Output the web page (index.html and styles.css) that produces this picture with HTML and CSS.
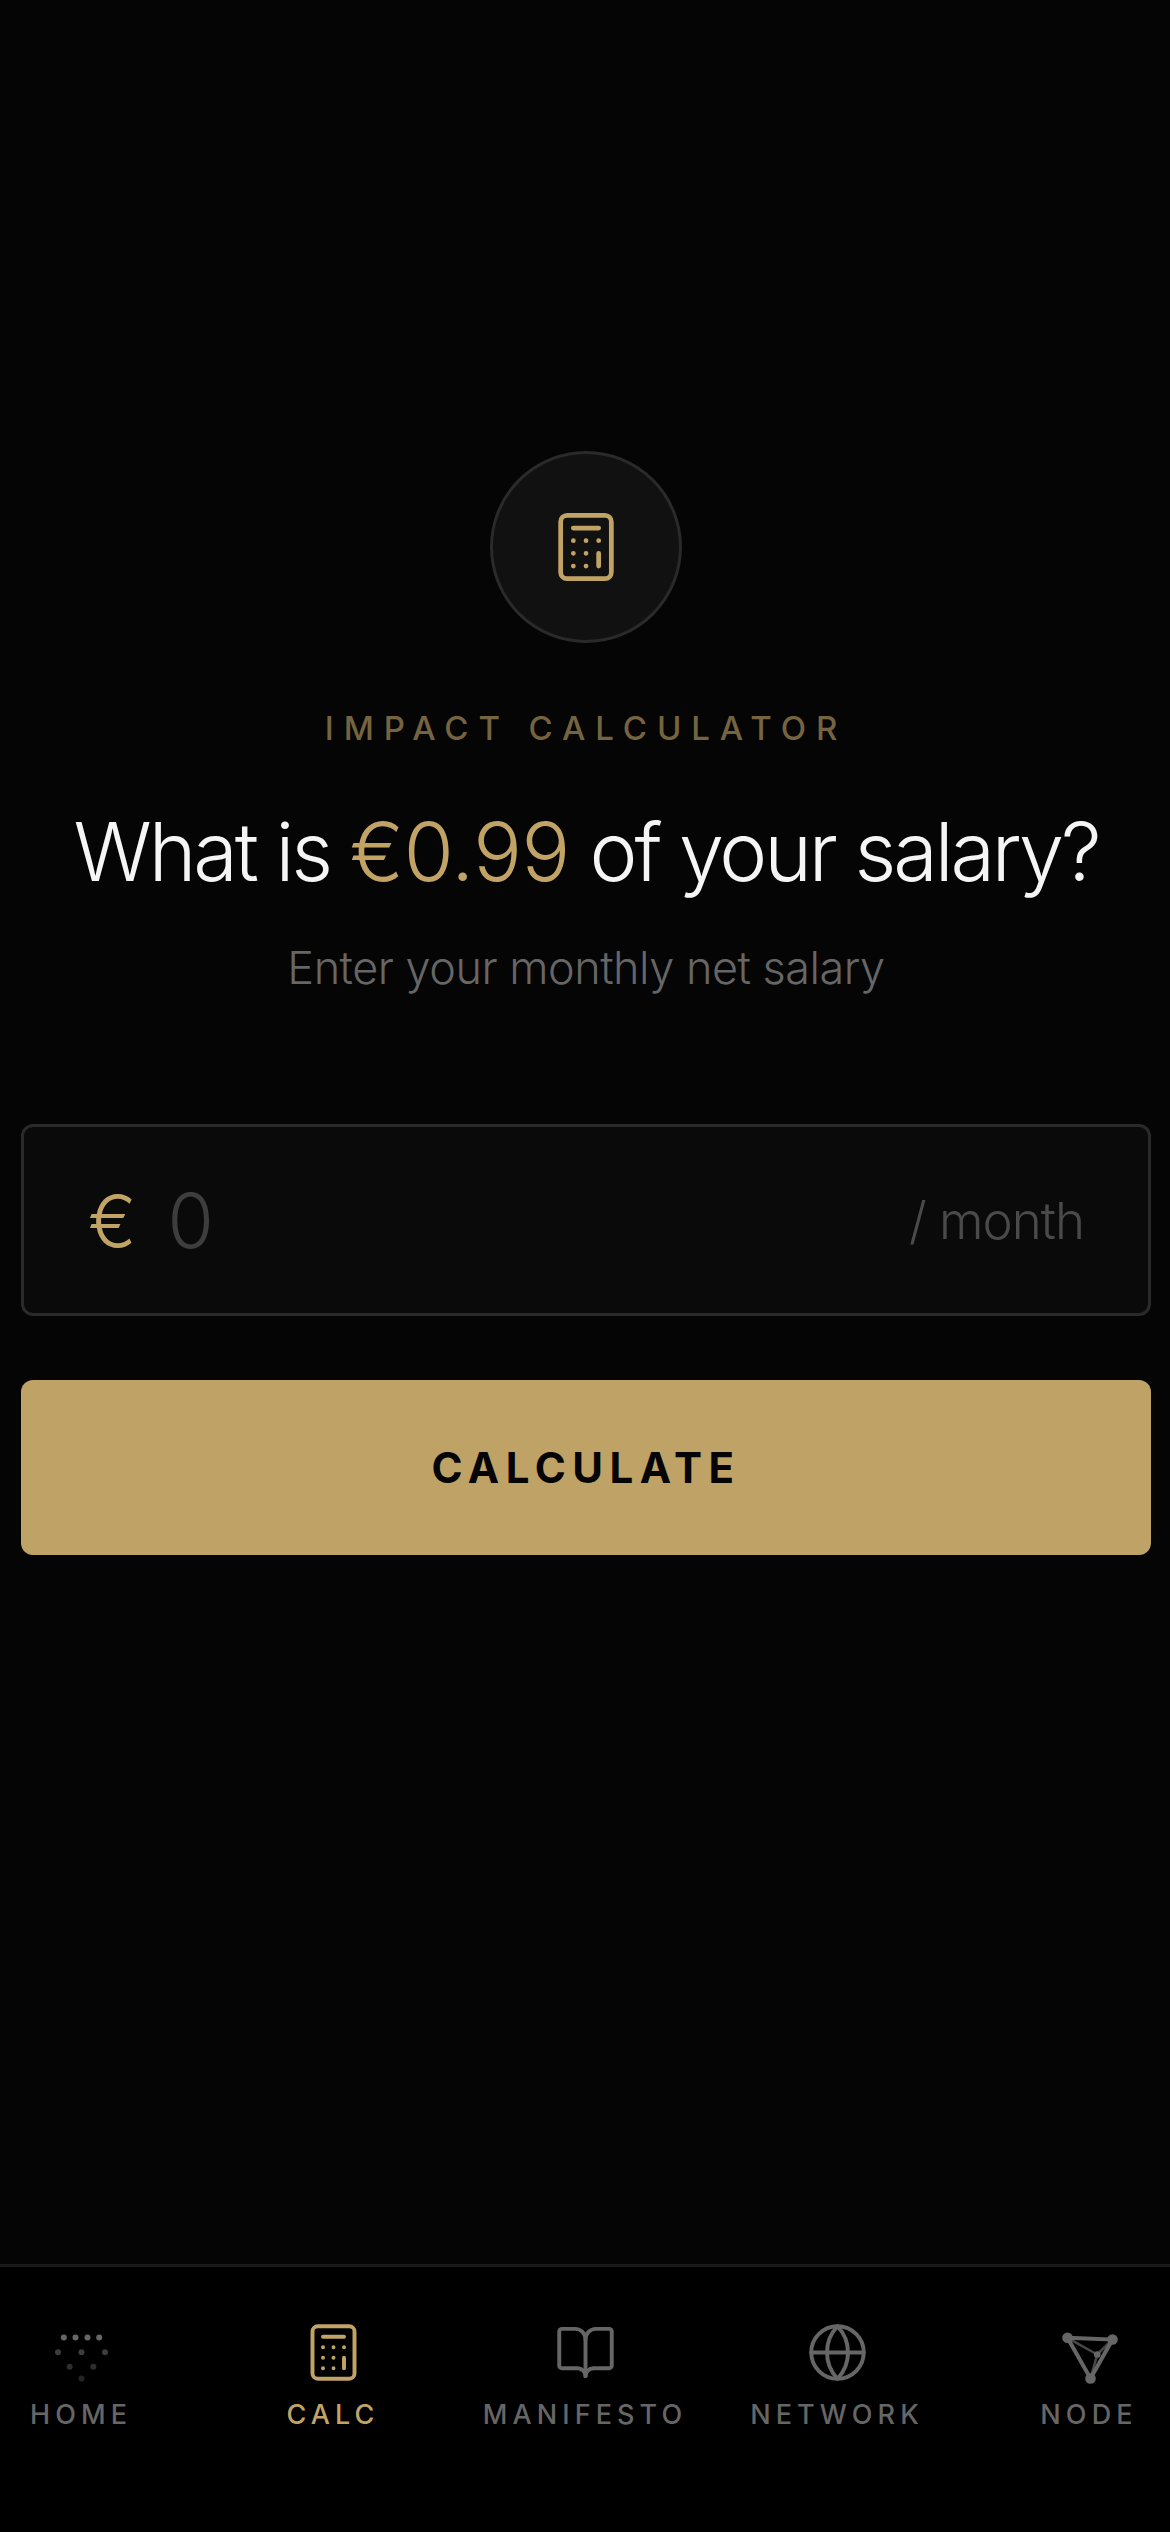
FILE: index.html
```html
<!DOCTYPE html>
<html lang="en">
<head>
    <meta charset="UTF-8">
    <title>Impact Calculator</title>
    <link rel="stylesheet" href="styles.css">
</head>
<body>
<div class="screen">
    <main class="calc">
        <div class="calc-badge">
            <svg class="icon-hero" viewBox="0 0 24 24" fill="none" stroke="currentColor" stroke-width="1.5" stroke-linecap="round" stroke-linejoin="round">
                <rect x="4" y="2" width="16" height="20" rx="2"/>
                <path d="M8 6h8M16 14v4M16 10h.01M12 10h.01M8 10h.01M12 14h.01M8 14h.01M12 18h.01M8 18h.01"/>
            </svg>
        </div>
        <p class="calc-label">IMPACT CALCULATOR</p>
        <h1 class="calc-title">What is <span class="gold">€0.99</span> of your salary?</h1>
        <p class="calc-sub">Enter your monthly net salary</p>
        <div class="salary-box">
            <span class="salary-euro">€</span>
            <span class="salary-value">0</span>
            <span class="salary-unit">/ month</span>
        </div>
        <button class="calc-btn" type="button">CALCULATE</button>
    </main>
    <nav class="tabs">
        <a class="tab" href="#">
            <svg class="tab-icon" viewBox="1.5 1.5 63 63" fill="currentColor">
                <circle cx="15.3" cy="18" r="3"/><circle cx="27" cy="18" r="3"/><circle cx="39" cy="18" r="3"/><circle cx="50.7" cy="18" r="3"/>
                <g opacity=".6"><circle cx="9.5" cy="32.7" r="3"/><circle cx="33" cy="32.7" r="3"/><circle cx="56.5" cy="32.7" r="3"/></g>
                <g opacity=".45"><circle cx="21.2" cy="47.3" r="3"/><circle cx="44.8" cy="47.3" r="3"/></g>
                <circle cx="33" cy="59" r="3" opacity=".35"/>
            </svg>
            <span>HOME</span>
        </a>
        <a class="tab tab-on" href="#">
            <svg class="tab-icon" viewBox="0 0 24 24" fill="none" stroke="currentColor" stroke-width="1.5" stroke-linecap="round" stroke-linejoin="round">
                <rect x="4" y="2" width="16" height="20" rx="2"/>
                <path d="M8 6h8M16 14v4M16 10h.01M12 10h.01M8 10h.01M12 14h.01M8 14h.01M12 18h.01M8 18h.01"/>
            </svg>
            <span>CALC</span>
        </a>
        <a class="tab" href="#">
            <svg class="tab-icon" viewBox="0 0 24 24" fill="none" stroke="currentColor" stroke-width="1.5" stroke-linecap="round" stroke-linejoin="round">
                <path d="M12 7v14"/>
                <path d="M3 18a1 1 0 0 1-1-1V4a1 1 0 0 1 1-1h5a4 4 0 0 1 4 4 4 4 0 0 1 4-4h5a1 1 0 0 1 1 1v13a1 1 0 0 1-1 1h-6a3 3 0 0 0-3 3 3 3 0 0 0-3-3z"/>
            </svg>
            <span>MANIFESTO</span>
        </a>
        <a class="tab" href="#">
            <svg class="tab-icon" viewBox="0 0 24 24" fill="none" stroke="currentColor" stroke-width="1.5" stroke-linecap="round" stroke-linejoin="round">
                <circle cx="12" cy="12" r="10"/>
                <path d="M12 2a14.5 14.5 0 0 0 0 20 14.5 14.5 0 0 0 0-20"/>
                <path d="M2 12h20"/>
            </svg>
            <span>NETWORK</span>
        </a>
        <a class="tab" href="#">
            <svg class="tab-icon" viewBox="1.5 1.5 63 63" fill="currentColor" stroke="currentColor" stroke-linecap="round">
                <path d="M11 18.3 56 20 34 59Z" fill="none" stroke-width="4"/>
                <path d="M11 18.3 40.7 35 34 59M56 20 40.7 35" fill="none" stroke-width="2.5" opacity=".7"/>
                <circle cx="11" cy="18.3" r="5.3" stroke="none"/>
                <circle cx="56" cy="20" r="5.3" stroke="none"/>
                <circle cx="34" cy="59" r="5.3" stroke="none"/>
                <circle cx="40.7" cy="35" r="3.3" stroke="none"/>
            </svg>
            <span>NODE</span>
        </a>
    </nav>
</div>
</body>
</html>
```

FILE: styles.css
```css
*{
    margin: 0;
    padding: 0;
    box-sizing: border-box;
}
body{
    background: #050505;
    font-family: Inter, "Liberation Sans", sans-serif;
}
.screen{
    height: 2532px;
    display: flex;
    flex-direction: column;
    overflow: hidden;
}
.calc{
    flex: 1;
    display: flex;
    flex-direction: column;
    align-items: center;
    padding: 451px 19px 0 21px;
}
.calc-badge{
    width: 192px;
    height: 192px;
    border: 3px solid #2a2a2a;
    border-radius: 50%;
    background: #111;
    color: #c2a366;
    display: flex;
    align-items: center;
    justify-content: center;
}
.icon-hero{
    width: 76px;
    height: 76px;
}
.calc-label{
    margin-top: 65px;
    font-size: 33px;
    line-height: 40px;
    font-weight: 500;
    letter-spacing: 9.9px;
    color: #75643f;
}
.calc-title{
    margin-top: 54px;
    font-size: 81px;
    line-height: 100px;
    font-weight: 300;
    letter-spacing: -3.1px;
    color: #f5f5f5;
    white-space: nowrap;
}
.gold{
    color: #c2a366;
    letter-spacing: -0.4px;
}
.calc-sub{
    margin-top: 38px;
    font-size: 45px;
    line-height: 56px;
    font-weight: 300;
    letter-spacing: -0.5px;
    color: #666;
}
.salary-box{
    margin-top: 128px;
    width: 100%;
    height: 192px;
    border: 3px solid #2a2a2a;
    border-radius: 12px;
    background: #0a0a0a;
    display: flex;
    align-items: center;
    gap: 31px;
    padding: 0 64px;
}
.salary-euro{
    font-size: 72px;
    font-weight: 300;
    color: #c2a366;
}
.salary-value{
    flex: 1;
    font-size: 75px;
    font-weight: 300;
    color: #3d3d3d;
}
.salary-unit{
    font-size: 51px;
    font-weight: 300;
    letter-spacing: -1px;
    color: #4a4a4a;
}
.calc-btn{
    margin-top: 64px;
    width: 100%;
    height: 175px;
    border: none;
    border-radius: 12px;
    background: #bfa265;
    color: #050505;
    font-family: inherit;
    font-size: 42px;
    font-weight: 700;
    letter-spacing: 6.5px;
}
.tabs{
    height: 268px;
    border-top: 3px solid #1a1a1a;
    background: #000;
    display: grid;
    grid-template-columns: repeat(5, 252px);
    justify-content: center;
    padding-top: 54px;
}
.tab{
    display: flex;
    flex-direction: column;
    align-items: center;
    gap: 14px;
    color: #666;
    text-decoration: none;
    font-size: 27px;
    line-height: 34px;
    font-weight: 500;
    letter-spacing: 5.1px;
}
.tab-on{
    color: #c2a366;
}
.tab-icon{
    width: 63px;
    height: 63px;
}
```
